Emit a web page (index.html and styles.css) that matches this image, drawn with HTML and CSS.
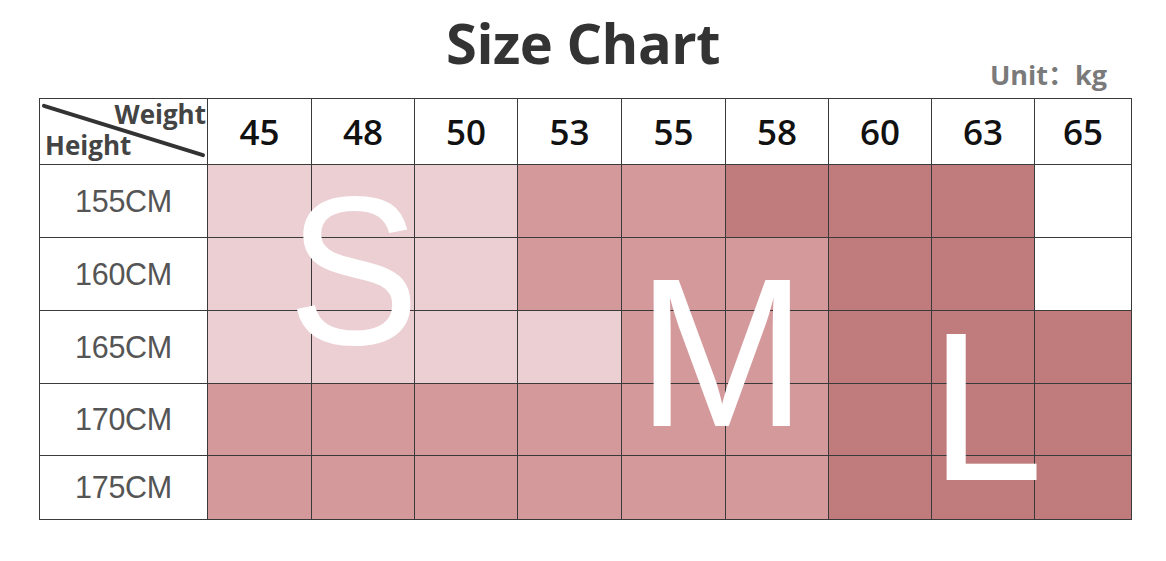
FILE: index.html
```html
<!DOCTYPE html>
<html lang="en">
<head>
<meta charset="utf-8">
<title>Size Chart</title>
<link rel="stylesheet" href="styles.css">
</head>
<body>
<div class="page">
  <h1 class="title">Size Chart</h1>
  <div class="unit">Unit：kg</div>
  <div class="chart">
    <table class="grid">
      <colgroup>
        <col class="c-label"><col class="c-104"><col class="c-103"><col class="c-103"><col class="c-104"><col class="c-104"><col class="c-103"><col class="c-103"><col class="c-103"><col class="c-97">
      </colgroup>
      <thead>
        <tr class="head">
          <th class="corner">
            <svg class="diag" viewBox="0 0 168 66" preserveAspectRatio="none"><line x1="4" y1="7" x2="164" y2="57" stroke="#333" stroke-width="4" stroke-linecap="round"/></svg>
            <span class="w">Weight</span>
            <span class="h">Height</span>
          </th>
          <th>45</th><th>48</th><th>50</th><th>53</th><th>55</th><th>58</th><th>60</th><th>63</th><th>65</th>
        </tr>
      </thead>
      <tbody>
        <tr class="r73"><td class="lab">155CM</td><td class="s"></td><td class="s"></td><td class="s"></td><td class="m"></td><td class="m"></td><td class="l"></td><td class="l"></td><td class="l"></td><td class="e"></td></tr>
        <tr class="r73"><td class="lab">160CM</td><td class="s"></td><td class="s"></td><td class="s"></td><td class="m"></td><td class="m"></td><td class="m"></td><td class="l"></td><td class="l"></td><td class="e"></td></tr>
        <tr class="r73"><td class="lab">165CM</td><td class="s"></td><td class="s"></td><td class="s"></td><td class="s"></td><td class="m"></td><td class="m"></td><td class="l"></td><td class="l"></td><td class="l"></td></tr>
        <tr class="r72"><td class="lab">170CM</td><td class="m"></td><td class="m"></td><td class="m"></td><td class="m"></td><td class="m"></td><td class="m"></td><td class="l"></td><td class="l"></td><td class="l"></td></tr>
        <tr class="r64"><td class="lab">175CM</td><td class="m"></td><td class="m"></td><td class="m"></td><td class="m"></td><td class="m"></td><td class="m"></td><td class="l"></td><td class="l"></td><td class="l"></td></tr>
      </tbody>
    </table>
    <span class="big big-s">S</span>
    <span class="big big-m">M</span>
    <span class="big big-l">L</span>
  </div>
</div>
</body>
</html>
```
FILE: styles.css
```css
html, body {
  margin: 0;
  padding: 0;
  background: #ffffff;
}
.page {
  width: 1166px;
  height: 561px;
  position: relative;
  font-family: "Open Sans", "Noto Sans", sans-serif;
}
.title {
  margin: 0;
  padding-top: 10px;
  height: 64px;
  text-align: center;
  font-family: "Open Sans", sans-serif;
  font-weight: 700;
  font-size: 56px;
  line-height: 64px;
  color: #333333;
  letter-spacing: -0.5px;
}
.unit {
  height: 30px;
  padding-right: 59px;
  text-align: right;
  font-family: "Open Sans", "Noto Sans CJK SC", sans-serif;
  font-weight: 700;
  font-size: 27px;
  line-height: 30px;
  color: #7a7a7a;
  margin-top: -14px;
  margin-bottom: 8px;
}
.chart {
  position: relative;
  margin-left: 39px;
  width: 1093px;
}
.grid {
  border-collapse: collapse;
  table-layout: fixed;
  width: 1093px;
}
.c-label { width: 168px; }
.c-104 { width: 104px; }
.c-103 { width: 103px; }
.c-97 { width: 97px; }
.grid th, .grid td {
  border: 1.5px solid #3a3a3a;
  padding: 0;
}
.head { height: 66px; }
.head th {
  font-family: "Open Sans", sans-serif;
  font-weight: 600;
  font-size: 35px;
  color: #111111;
  text-align: center;
  vertical-align: middle;
  background: #ffffff;
}
.corner {
  position: relative;
}
.diag {
  position: absolute;
  left: 0;
  top: 0;
  width: 100%;
  height: 100%;
}
.corner .w, .corner .h {
  position: absolute;
  font-family: "Open Sans", sans-serif;
  font-weight: 700;
  font-size: 26px;
  line-height: 24px;
  color: #444444;
}
.corner .w { right: 1px; top: 3px; }
.corner .h { left: 5px; bottom: 7px; }
.r73 { height: 73px; }
.r72 { height: 72px; }
.r64 { height: 64px; }
.lab {
  text-align: center;
  font-family: "Liberation Sans", Arial, sans-serif;
  font-size: 30.5px;
  color: #555555;
  background: #ffffff;
  letter-spacing: -0.3px;
}
.s { background: #ebcfd3; }
.m { background: #d4999b; }
.l { background: #c07c7d; }
.e { background: #ffffff; }
.big {
  position: absolute;
  font-family: "Liberation Sans", Arial, sans-serif;
  font-weight: 400;
  color: #ffffff;
  font-size: 212px;
  line-height: 1;
  transform-origin: left top;
}
.big-s { left: 249px; top: 67px; transform: scaleX(0.93); }
.big-m { left: 598px; top: 149px; transform: scaleX(0.96); }
.big-l { left: 891px; top: 203px; transform: scaleX(0.96); }
```
